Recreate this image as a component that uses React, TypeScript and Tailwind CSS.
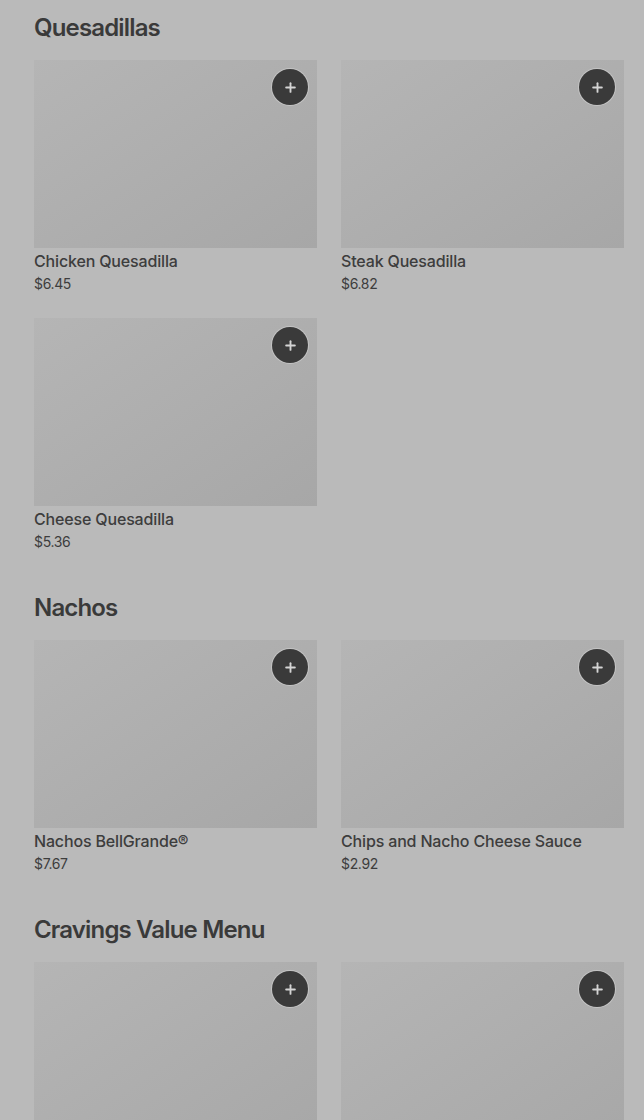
import { Plus } from "lucide-react";

type Item = { name: string; price?: string };

const sections: { title: string; items: Item[] }[] = [
  {
    title: "Quesadillas",
    items: [
      { name: "Chicken Quesadilla", price: "$6.45" },
      { name: "Steak Quesadilla", price: "$6.82" },
      { name: "Cheese Quesadilla", price: "$5.36" },
    ],
  },
  {
    title: "Nachos",
    items: [
      { name: "Nachos BellGrande®", price: "$7.67" },
      { name: "Chips and Nacho Cheese Sauce", price: "$2.92" },
    ],
  },
  {
    title: "Cravings Value Menu",
    items: [{ name: "" }, { name: "" }],
  },
];

function MenuCard({ item }: { item: Item }) {
  return (
    <div className="flex flex-col">
      <div className="relative h-[188px] bg-gradient-to-br from-[#b5b5b5] to-[#a7a7a7]">
        <button className="absolute top-[9px] right-[9px] w-9 h-9 rounded-full bg-[#3a3a3a] ring-1 ring-[#c4c4c4] flex items-center justify-center">
          <Plus className="w-[15px] h-[15px] text-[#d4d4d4]" strokeWidth={3} />
        </button>
      </div>
      {item.name && (
        <>
          <div className="mt-px text-[16px] leading-6 font-medium tracking-[-0.01em] text-[#3d3d3d]">{item.name}</div>
          <div className="mt-px text-[14px] leading-5 text-[#3d3d3d] tracking-tight">{item.price}</div>
        </>
      )}
    </div>
  );
}

export default function App() {
  return (
    <div
      className="min-h-[1120px] bg-[#bababa] pl-[34px] pr-[20px] pt-[11px]"
      style={{ fontFamily: "Inter, 'Liberation Sans', sans-serif" }}
    >
      {sections.map((s) => (
        <section key={s.title} className="mb-[39px]">
          <h2 className="h-8 leading-[34px] text-[24px] font-semibold tracking-[-0.035em] text-[#3a3a3a] mb-[17px]">
            {s.title}
          </h2>
          <div className="grid grid-cols-2 gap-x-6 gap-y-6">
            {s.items.map((it, i) => (
              <MenuCard key={i} item={it} />
            ))}
          </div>
        </section>
      ))}
    </div>
  );
}
